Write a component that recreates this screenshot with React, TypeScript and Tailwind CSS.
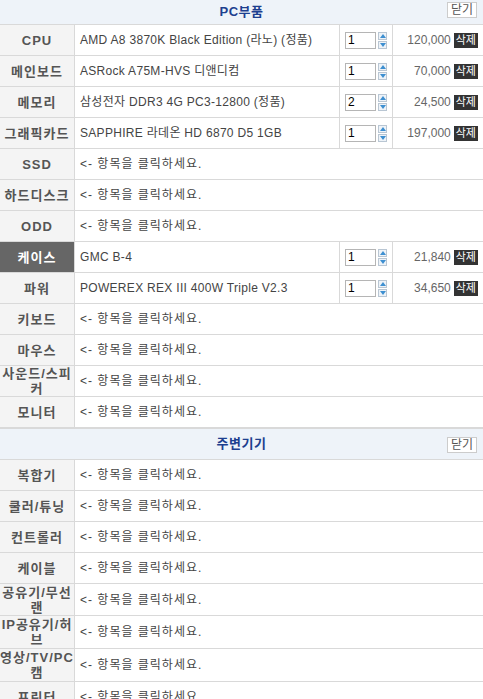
import React from "react";

type Part = {
  label: string;
  name?: string;
  qty?: number;
  price?: string;
  active?: boolean;
  h?: string;
};

const pcParts: Part[] = [
  { label: "CPU", name: "AMD A8 3870K Black Edition (라노) (정품)", qty: 1, price: "120,000" },
  { label: "메인보드", name: "ASRock A75M-HVS 디앤디컴", qty: 1, price: "70,000" },
  { label: "메모리", name: "삼성전자 DDR3 4G PC3-12800 (정품)", qty: 2, price: "24,500" },
  { label: "그래픽카드", name: "SAPPHIRE 라데온 HD 6870 D5 1GB", qty: 1, price: "197,000" },
  { label: "SSD" },
  { label: "하드디스크" },
  { label: "ODD" },
  { label: "케이스", name: "GMC B-4", qty: 1, price: "21,840", active: true },
  { label: "파워", name: "POWEREX REX III 400W Triple V2.3", qty: 1, price: "34,650" },
  { label: "키보드" },
  { label: "마우스" },
  { label: "사운드/스피커" },
  { label: "모니터" },
];

const etcParts: Part[] = [
  { label: "복합기" },
  { label: "쿨러/튜닝" },
  { label: "컨트롤러" },
  { label: "케이블" },
  { label: "공유기/무선랜", h: "h-[32px]" },
  { label: "IP공유기/허브", h: "h-[33px]" },
  { label: "영상/TV/PC캠", h: "h-[33px]" },
  { label: "프린터" },
];

const Spinner = () => (
  <div className="flex flex-col gap-[1px] ml-[2px]">
    {[0, 1].map((i) => (
      <div
        key={i}
        className="w-[9px] h-[8px] border border-[#b9c6d3] bg-[#eef3f8] flex items-center justify-center"
      >
        <svg width="6" height="4" viewBox="0 0 6 4">
          {i === 0 ? (
            <path d="M3 0 L6 4 L0 4 Z" fill="#3d8fd1" />
          ) : (
            <path d="M0 0 L6 0 L3 4 Z" fill="#3d8fd1" />
          )}
        </svg>
      </div>
    ))}
  </div>
);

const Row: React.FC<{ p: Part }> = ({ p }) => (
  <div className={`flex border-b border-[#d9d9d9] ${p.h ?? "h-[31px]"}`}>
    <div
      className={`w-[75px] shrink-0 border-r border-[#d9d9d9] flex items-center justify-center text-center font-bold text-[13px] leading-[15px] tracking-[1px] ${
        p.active ? "bg-[#666666] text-white" : "bg-[#f4f4f4] text-[#555555]"
      }`}
    >
      {p.label}
    </div>
    {p.name ? (
      <>
        <div className="flex-1 flex items-center pl-[5px] text-[12px] tracking-[0.3px] text-[#444444]">
          {p.name}
        </div>
        <div className="w-[53px] shrink-0 border-l border-[#d9d9d9] flex items-center pl-[5px]">
          <div className="w-[31px] h-[17px] border border-[#b5b5b5] bg-white text-[12px] leading-[15px] text-black pl-[2px]">
            {p.qty}
          </div>
          <Spinner />
        </div>
        <div className="w-[91px] shrink-0 border-l border-[#d9d9d9] flex items-center justify-end pr-[5px] gap-[3px]">
          <span className="text-[12px] text-[#666666]">{p.price}</span>
          <span className="bg-[#333333] text-white text-[11px] leading-[15px] h-[15px] px-[2px]">
            삭제
          </span>
        </div>
      </>
    ) : (
      <div className="flex-1 flex items-center pl-[5px] text-[12px] tracking-[1px] text-[#444444]">
        &lt;- 항목을 클릭하세요.
      </div>
    )}
  </div>
);

const Header: React.FC<{ title: string; h: string; btnTop: string }> = ({ title, h, btnTop }) => (
  <div className={`relative flex items-center justify-center bg-[#eef3f9] border-b border-[#d9d9d9] ${h}`}>
    <span className="font-bold text-[13px] tracking-[0.5px] text-[#1d3f8f]">{title}</span>
    <span
      className={`absolute right-[6px] ${btnTop} h-[16px] px-[3px] border border-[#cccccc] bg-white text-[12px] leading-[14px] text-[#555555]`}
    >
      닫기
    </span>
  </div>
);

export default function App() {
  return (
    <div
      className="w-[483px] bg-white overflow-hidden h-[699px]"
      style={{ fontFamily: '"Liberation Sans", "Noto Sans CJK KR", sans-serif' }}
    >
      <Header title="PC부품" h="h-[25px]" btnTop="top-[2px]" />
      {pcParts.map((p) => (
        <Row key={p.label} p={p} />
      ))}
      <Header title="주변기기" h="h-[32px] border-t border-[#d9d9d9]" btnTop="top-[8px]" />
      {etcParts.map((p) => (
        <Row key={p.label} p={p} />
      ))}
    </div>
  );
}
